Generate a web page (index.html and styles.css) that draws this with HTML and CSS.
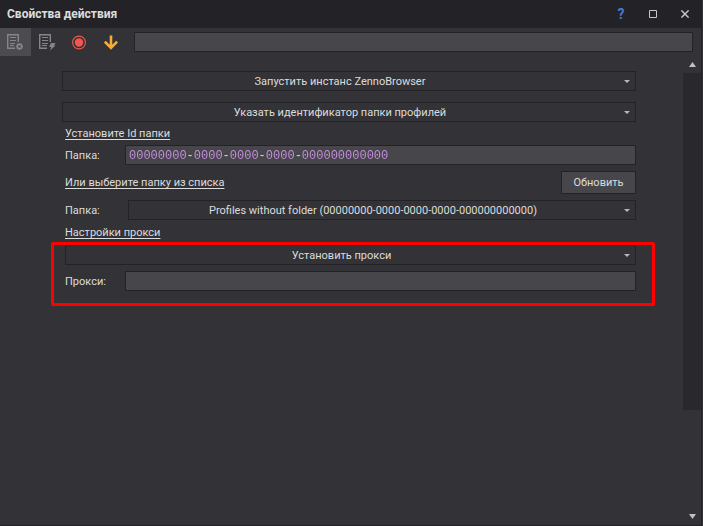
FILE: index.html
```
<!DOCTYPE html>
<html lang="ru">
<head>
    <meta charset="UTF-8">
    <meta name="viewport" content="width=device-width, initial-scale=1.0">
    <title>Свойства действия</title>
    <link rel="stylesheet" href="styles.css">
</head>
<body>
    <div class="window">
        <header class="titlebar">
            <h1 class="title">Свойства действия</h1>
            <button class="title-button help" type="button" aria-label="Справка">?</button>
            <button class="title-button" type="button" aria-label="Развернуть">
                <svg width="8" height="8" viewBox="0 0 8 8"><path d="M.5 .5h7v7h-7z" fill="none" stroke="currentColor"/></svg>
            </button>
            <button class="title-button" type="button" aria-label="Закрыть">
                <svg width="8" height="8" viewBox="0 0 8 8"><path d="M.4 .4l7.2 7.2M7.6 .4L.4 7.6" fill="none" stroke="currentColor" stroke-width="1.4"/></svg>
            </button>
        </header>

        <div class="toolbar">
            <button class="tool active" type="button" aria-label="Настройки">
                <svg width="17" height="17" viewBox="0 0 17 17" fill="none" stroke="currentColor">
                    <path d="M8 14.3H.7V.7h10.6V8" stroke-width="1.4"/>
                    <path d="M3 3.5h6M3 6.5h6M3 9.5h5M3 11.5h4"/>
                    <circle cx="12.5" cy="12.5" r="2.1" stroke-width="1.6"/>
                    <path d="M12.5 9v1.4M12.5 14.6V16M9 12.5h1.4M14.6 12.5H16M10 10l1 1M14 14l1 1M15 10l-1 1M11 14l-1 1" stroke-width="1.3"/>
                </svg>
            </button>
            <button class="tool" type="button" aria-label="События">
                <svg width="17" height="17" viewBox="0 0 17 17" fill="none" stroke="currentColor">
                    <path d="M8 14.3H.7V.7h10.6V8" stroke-width="1.4"/>
                    <path d="M3 3.5h6M3 6.5h6M3 9.5h6M3 11.5h5"/>
                    <path d="M12 9h4.5l-1.5 2.5h1.5L11 16.5l1.3-3.6H10z" fill="currentColor" stroke="none"/>
                </svg>
            </button>
            <button class="tool record" type="button" aria-label="Запись">
                <svg width="15" height="15" viewBox="0 0 15 15">
                    <circle cx="7" cy="7.5" r="6.4" fill="none" stroke="currentColor" stroke-width="1.1"/>
                    <circle cx="7" cy="7.5" r="4.2" fill="currentColor"/>
                </svg>
            </button>
            <button class="tool insert" type="button" aria-label="Вставить">
                <svg width="15" height="15" viewBox="0 0 15 15"><path d="M7 .5v12M.9 6.7L7 12.8l6.1-6.1" fill="none" stroke="currentColor" stroke-width="2.6"/></svg>
            </button>
            <input class="field search" type="text" aria-label="Поиск">
        </div>

        <div class="content">
            <form class="form">
                <div class="select action">
                    <select aria-label="Действие"><option>Запустить инстанс ZennoBrowser</option></select>
                </div>
                <div class="select">
                    <select aria-label="Способ выбора"><option>Указать идентификатор папки профилей</option></select>
                </div>

                <h2 class="caption">Установите Id папки</h2>
                <div class="row">
                    <label class="label" for="folder-id">Папка:</label>
                    <div class="field code">
                        <input id="folder-id" type="text" value="00000000-0000-0000-0000-000000000000">
                    </div>
                </div>

                <div class="row refresh">
                    <h2 class="caption">Или выберите папку из списка</h2>
                    <button class="button" type="button">Обновить</button>
                </div>
                <div class="row list">
                    <label class="label" for="folder">Папка:</label>
                    <div class="select">
                        <select id="folder"><option>Profiles without folder (00000000-0000-0000-0000-000000000000)</option></select>
                    </div>
                </div>

                <h2 class="caption">Настройки прокси</h2>
                <div class="proxy">
                    <div class="select">
                        <select aria-label="Режим прокси"><option>Установить прокси</option></select>
                    </div>
                    <div class="row">
                        <label class="label" for="proxy">Прокси:</label>
                        <input class="field" id="proxy" type="text">
                    </div>
                </div>
            </form>

            <div class="scrollbar">
                <button class="scroll-button" type="button" aria-label="Вверх">
                    <svg width="7" height="5" viewBox="0 0 7 5"><path d="M0 5L3.5 0L7 5z" fill="currentColor"/></svg>
                </button>
                <div class="track"><div class="thumb"></div></div>
                <button class="scroll-button" type="button" aria-label="Вниз">
                    <svg width="7" height="5" viewBox="0 0 7 5"><path d="M0 0h7L3.5 5z" fill="currentColor"/></svg>
                </button>
            </div>
        </div>
    </div>
</body>
</html>
```
FILE: styles.css
```
* {
    box-sizing: border-box;
}
body {
    margin: 0;
    background: #333337;
    color: #dcdcdc;
    font: 11px/16px Roboto, Tahoma, sans-serif;
}
button, input, select {
    margin: 0;
    padding: 0;
    border: none;
    border-radius: 0;
    background: none;
    color: inherit;
    font: inherit;
}
svg {
    display: block;
}
.window {
    display: flex;
    flex-direction: column;
    min-height: 100vh;
    margin-right: 1px;
    border-right: 1px solid #232327;
    border-bottom: 1px solid #232327;
}

/* title bar */
.titlebar {
    display: flex;
    align-items: center;
    height: 28px;
    padding-left: 7px;
    background: #232327;
}
.title {
    flex: 1;
    margin: 0;
    font-size: 12px;
    font-weight: bold;
}
.title-button {
    display: flex;
    align-items: center;
    justify-content: center;
    width: 32px;
    height: 28px;
    color: #c8c8c8;
}
.help {
    color: #4a76d8;
    font-size: 14px;
    font-weight: bold;
}

/* toolbar */
.toolbar {
    display: flex;
    align-items: center;
    gap: 1px;
    height: 28px;
    padding-right: 8px;
}
.tool {
    display: flex;
    align-items: center;
    justify-content: center;
    width: 31px;
    height: 28px;
    color: #85858c;
}
.active {
    background: #4b4b50;
}
.record {
    color: #f4564e;
}
.insert {
    color: #f5ac38;
}
.search {
    margin-left: 6px;
}

/* form */
.content {
    display: flex;
    flex: 1;
}
.form {
    flex: 1;
    padding: 15px 47px 0 62px;
}
.field {
    flex: 1;
    min-width: 0;
    height: 20px;
    padding: 0 3px;
    border: 1px solid #232327;
    background: #47474b;
}
.select {
    position: relative;
    flex: 1;
}
.select select {
    display: block;
    width: 100%;
    height: 20px;
    padding: 2px 18px 0 0;
    border: 1px solid #232327;
    appearance: none;
    text-align-last: center;
}
.select::after {
    content: "";
    position: absolute;
    top: 9px;
    right: 6px;
    border: 3px solid transparent;
    border-top-color: #b8b8b8;
    border-bottom: none;
    pointer-events: none;
}
.action {
    margin-bottom: 11px;
}
.caption {
    height: 23px;
    margin: 0;
    padding-left: 3px;
    font-size: 11px;
    font-weight: normal;
    line-height: 24px;
    text-decoration: underline;
    text-underline-offset: 2px;
}
.row {
    display: flex;
    align-items: center;
}
.label {
    width: 63px;
    padding: 2px 0 0 3px;
}
.code input {
    display: block;
    width: 100%;
    height: 18px;
    padding-top: 2px;
    font: 12px/16px "Liberation Mono", monospace;
    /* digits are violet, separators are white */
    background: linear-gradient(90deg,
        #c88fe0 8ch, #dcdcdc 8ch 9ch,
        #c88fe0 9ch 13ch, #dcdcdc 13ch 14ch,
        #c88fe0 14ch 18ch, #dcdcdc 18ch 19ch,
        #c88fe0 19ch 23ch, #dcdcdc 23ch 24ch,
        #c88fe0 24ch);
    background-clip: text;
    -webkit-background-clip: text;
    -webkit-text-fill-color: transparent;
    caret-color: #dcdcdc;
}
.refresh {
    justify-content: space-between;
    margin: 6px 0;
}
.button {
    width: 75px;
    height: 23px;
    padding-top: 1px;
    border: 1px solid #232327;
    background: #47474b;
}
.list .label {
    width: 66px;
}
.list + .caption {
    height: 25px;
    line-height: 26px;
}
.proxy {
    position: relative;
    padding-left: 3px;
}
.proxy::after {
    content: "";
    position: absolute;
    inset: -3px -19px -15px -11px;
    border: 3px solid #ff0000;
    border-radius: 2px;
    pointer-events: none;
}
.proxy .row {
    margin-top: 6px;
}
.proxy .label {
    width: 60px;
    padding-left: 0;
}

/* scrollbar */
.scrollbar {
    display: flex;
    flex-direction: column;
    width: 18px;
}
.scroll-button {
    display: flex;
    align-items: center;
    justify-content: center;
    height: 17px;
    color: #c0c0c0;
}
.track {
    flex: 1;
}
.thumb {
    height: 77.5%;
    background: #29292d;
}
```
